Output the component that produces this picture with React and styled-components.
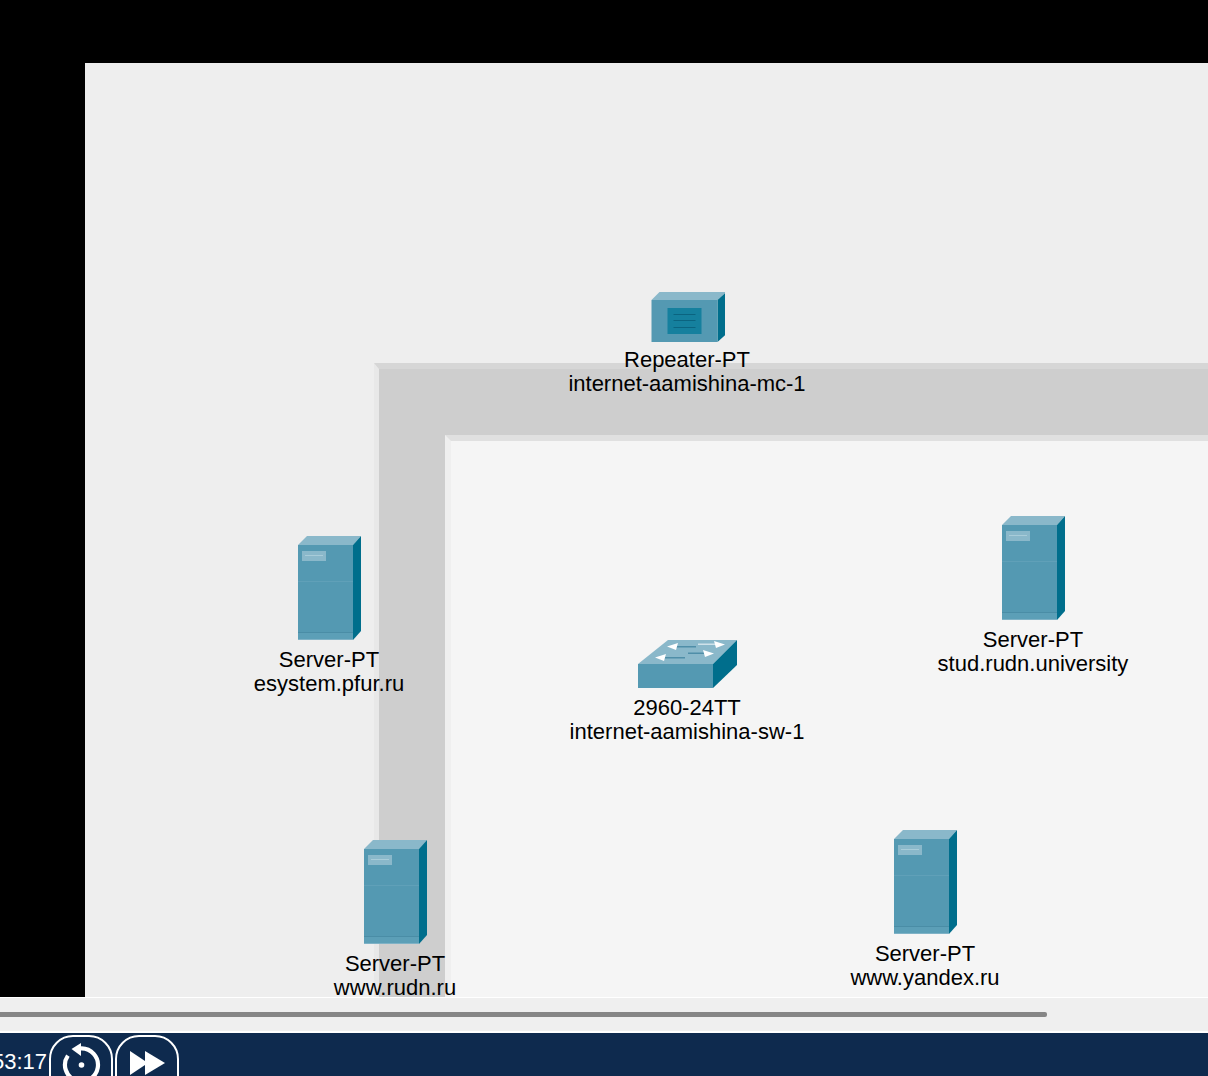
import styled, { createGlobalStyle } from "styled-components";

const GlobalStyle = createGlobalStyle`
  html, body {
    margin: 0;
    padding: 0;
    background: #000;
    overflow: hidden;
  }
  body {
    font-family: "Liberation Sans", Arial, sans-serif;
  }
`;

const Page = styled.div`
  width: 1208px;
  height: 1076px;
  display: flex;
  flex-direction: column;
  overflow: hidden;
`;

const Viewport = styled.div`
  height: 934px;
  padding: 63px 0 0 85px;
  background: #000;
  display: flex;
`;

const Canvas = styled.div`
  position: relative;
  flex: 1;
  background: #eeeeee;
  overflow: hidden;
`;

const OuterZone = styled.div`
  position: absolute;
  left: 289px;
  top: 300px;
  right: -10px;
  bottom: -10px;
  box-sizing: border-box;
  padding: 66px 0 0 66px;
  background: #cecece;
  border-top: 6px solid #d6d6d6;
  border-left: 5px solid #e8e8e8;
`;

const InnerZone = styled.div`
  box-sizing: border-box;
  height: 100%;
  background: #f5f5f5;
  border-top: 6px solid #e0e0e0;
  border-left: 6px solid #efefef;
`;

const Node = styled.div`
  position: absolute;
  left: ${(p) => p.$x - 150}px;
  top: ${(p) => p.$y}px;
  width: 300px;
  display: flex;
  flex-direction: column;
  align-items: center;
`;

const Label = styled.div`
  margin-top: ${(p) => p.$gap}px;
  font-size: 22px;
  line-height: 24px;
  color: #000;
  text-align: center;
  white-space: nowrap;
`;

const Icon = styled.svg`
  display: block;
  flex: none;
`;

const ScrollRow = styled.div`
  height: 36px;
  box-sizing: border-box;
  padding-top: 14px;
  background: #efefef;
  border-top: 1px solid #fff;
  border-bottom: 2px solid #fff;
`;

const ScrollThumb = styled.div`
  width: 1047px;
  height: 5px;
  background: #868686;
  border-radius: 0 2px 2px 0;
`;

const Footer = styled.div`
  flex: 1;
  display: flex;
  align-items: flex-start;
  gap: 2px;
  background: #0e2a4e;
  overflow: hidden;
  padding-top: 2px;
`;

const Time = styled.div`
  width: 47px;
  height: 54px;
  display: flex;
  justify-content: flex-end;
  align-items: center;
  font-size: 22px;
  color: #fff;
  overflow: hidden;
  white-space: nowrap;
`;

const RoundButton = styled.button`
  flex: none;
  box-sizing: border-box;
  width: 64px;
  height: 64px;
  padding: 0 0 4px;
  display: flex;
  align-items: center;
  justify-content: center;
  background: transparent;
  border: 2px solid #fff;
  border-radius: 24px;
`;

const FRONT = "#5499b2";
const TOP = "#8ab8ca";
const SIDE = "#006e8c";

function ServerIcon() {
  return (
    <Icon width="64" height="104" viewBox="0 0 64 104">
      <polygon points="1,9 10,0 64,0 56,9" fill={TOP} />
      <polygon points="56,9 64,0 64,95 56,104" fill={SIDE} />
      <rect x="1" y="9" width="55" height="95" fill={FRONT} />
      <rect x="1" y="45" width="55" height="1" fill="#60a0b8" />
      <rect x="1" y="96" width="55" height="8" fill="#5c9fb7" />
      <rect x="1" y="96" width="55" height="1" fill="#4a8da6" />
      <rect x="1" y="103" width="55" height="1" fill="#7fb2c6" />
      <rect x="5" y="15" width="24" height="10" fill="#8ab8ca" />
      <rect x="8" y="19" width="18" height="1" fill="#a8ccd9" />
    </Icon>
  );
}

function RepeaterIcon() {
  return (
    <Icon width="76" height="51" viewBox="-2.5 0 76 51">
      <polygon points="0,9 8,1 75,1 66,9" fill={TOP} />
      <polygon points="66,9 75,1 75,43 66,51" fill={SIDE} />
      <rect x="0" y="9" width="66" height="42" fill={FRONT} />
      <rect x="16" y="17" width="34" height="26" fill="#15809e" />
      <rect x="22" y="23" width="22" height="1" fill="#0b6480" />
      <rect x="22" y="29" width="22" height="1" fill="#0b6480" />
      <rect x="22" y="36" width="22" height="1" fill="#0b6480" />
    </Icon>
  );
}

function SwitchIcon() {
  return (
    <Icon width="100" height="48" viewBox="0 0 100 48">
      <polygon points="1,24 31,0 100,0 76,24" fill={TOP} />
      <polygon points="76,24 100,0 100,25 76,48" fill={SIDE} />
      <rect x="1" y="24" width="75" height="24" fill={FRONT} />
      <rect x="36" y="6" width="23" height="1.5" fill="#4f8ea8" />
      <polygon points="30,6.5 41,3 39,10" fill="#fff" />
      <rect x="61" y="3.5" width="20" height="1.5" fill="#cfe2ea" />
      <polygon points="88,4.5 77,1 79,8" fill="#fff" />
      <rect x="25" y="17" width="23" height="1.5" fill="#4f8ea8" />
      <polygon points="18,17.5 29,14 27,21" fill="#fff" />
      <rect x="51" y="12.5" width="18" height="1.5" fill="#4f8ea8" />
      <polygon points="77,13.5 66,10 68,17" fill="#fff" />
    </Icon>
  );
}

function ReplayIcon() {
  return (
    <svg width="40" height="40" viewBox="0 0 40 40" style={{ overflow: "visible" }}>
      <path
        d="M 19.5 3.5 A 16.5 16.5 0 1 1 6.9 10.6"
        fill="none"
        stroke="#fff"
        strokeWidth="4.2"
      />
      <polygon points="10.5,4 20,-2 20,11" fill="#fff" />
      <circle cx="20.5" cy="20" r="2.8" fill="#fff" />
    </svg>
  );
}

function ForwardIcon() {
  return (
    <svg width="36" height="28" viewBox="0 0 36 28">
      <polygon points="1,0 19,12 1,24" fill="#fff" />
      <polygon points="16,0 36,12 16,24" fill="#fff" />
    </svg>
  );
}

const nodes = [
  { x: 602, y: 228, gap: 6, Glyph: RepeaterIcon, lines: ["Repeater-PT", "internet-aamishina-mc-1"] },
  { x: 244, y: 473, gap: 8, Glyph: ServerIcon, lines: ["Server-PT", "esystem.pfur.ru"] },
  { x: 310, y: 777, gap: 8, Glyph: ServerIcon, lines: ["Server-PT", "www.rudn.ru"] },
  { x: 948, y: 453, gap: 8, Glyph: ServerIcon, lines: ["Server-PT", "stud.rudn.university"] },
  { x: 840, y: 767, gap: 8, Glyph: ServerIcon, lines: ["Server-PT", "www.yandex.ru"] },
  { x: 602, y: 577, gap: 8, Glyph: SwitchIcon, lines: ["2960-24TT", "internet-aamishina-sw-1"] },
];

export default function App() {
  return (
    <Page>
      <GlobalStyle />
      <Viewport>
        <Canvas>
          <OuterZone>
            <InnerZone />
          </OuterZone>
          {nodes.map(({ x, y, gap, Glyph, lines }) => (
            <Node key={lines[1]} $x={x} $y={y}>
              <Glyph />
              <Label $gap={gap}>
                {lines[0]}
                <br />
                {lines[1]}
              </Label>
            </Node>
          ))}
        </Canvas>
      </Viewport>
      <ScrollRow>
        <ScrollThumb />
      </ScrollRow>
      <Footer>
        <Time>03:53:17</Time>
        <RoundButton>
          <ReplayIcon />
        </RoundButton>
        <RoundButton>
          <ForwardIcon />
        </RoundButton>
      </Footer>
    </Page>
  );
}
